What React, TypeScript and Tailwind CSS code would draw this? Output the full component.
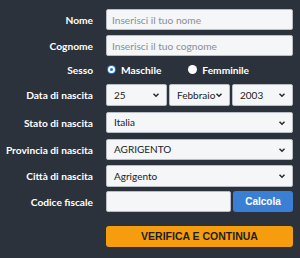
import React from "react";

const font = { fontFamily: 'Lato, "Open Sans", sans-serif' };
const arial = { fontFamily: '"Liberation Sans", Arial, sans-serif' };

function Chevron() {
  return (
    <svg width="8" height="6" viewBox="0 0 8 6" className="absolute right-[6px] top-1/2 -translate-y-1/2">
      <path d="M1.5 1.8 L4 4.3 L6.5 1.8" fill="none" stroke="#2a2a2a" strokeWidth="1.5" />
    </svg>
  );
}

function Select({ value, className = "" }: { value: string; className?: string }) {
  return (
    <div className={`relative rounded-[2px] border border-[#b9bec4] bg-[#f4f6f8] pl-[7px] flex items-center text-[10px] text-[#222] whitespace-nowrap ${className}`}>
      {value}
      <Chevron />
    </div>
  );
}

function Row({ label, children, className = "" }: { label: string; children: React.ReactNode; className?: string }) {
  return (
    <div className={`flex items-center ${className}`}>
      <div className="w-[93px] text-right text-[10.2px] leading-[14px] font-bold text-white whitespace-nowrap">{label}</div>
      <div className="ml-[13px] w-[187px]">{children}</div>
    </div>
  );
}

const inputCls =
  "block w-full h-[21px] rounded-[2px] border border-[#b9bec4] bg-[#f4f6f8] px-[5px] text-[10.2px] placeholder:text-[#8a8f95] outline-none";

export default function App() {
  return (
    <div className="w-[300px] h-[258px] overflow-hidden bg-[#2b323b] pt-[9px]" style={font}>
      <Row label="Nome">
        <input placeholder="Inserisci il tuo nome" className={inputCls} />
      </Row>
      <Row label="Cognome" className="mt-[5px]">
        <input placeholder="Inserisci il tuo cognome" className={inputCls} />
      </Row>
      <Row label="Sesso" className="mt-[5px] h-[17px]">
        <div className="flex items-center text-[10.2px] leading-[14px] font-bold text-white">
          <span className="ml-[1px] w-[9px] h-[9px] rounded-full bg-[#1a73e8] flex items-center justify-center">
            <span className="w-[3px] h-[3px] rounded-full bg-[#1a73e8] border-2 border-white box-content" />
          </span>
          <span className="ml-[5px]">Maschile</span>
          <span className="ml-[27px] w-[9px] h-[9px] rounded-full bg-white" />
          <span className="ml-[5px]">Femminile</span>
        </div>
      </Row>
      <Row label="Data di nascita" className="mt-[6px]">
        <div className="flex gap-[2px]">
          <Select value="25" className="w-[61px] h-[22px]" />
          <Select value="Febbraio" className="w-[61px] h-[22px]" />
          <Select value="2003" className="w-[61px] h-[22px]" />
        </div>
      </Row>
      <Row label="Stato di nascita" className="mt-[6px]">
        <Select value="Italia" className="h-[21px]" />
      </Row>
      <Row label="Provincia di nascita" className="mt-[6px]">
        <Select value="AGRIGENTO" className="h-[21px]" />
      </Row>
      <Row label="Città di nascita" className="mt-[5px]">
        <Select value="Agrigento" className="h-[22px]" />
      </Row>
      <Row label="Codice fiscale" className="mt-[4px]">
        <div className="flex gap-[2px]">
          <input className="block w-[125px] h-[21px] rounded-[2px] border border-[#b9bec4] bg-[#f4f6f8] px-[5px] text-[10.2px] outline-none" />
          <button className="w-[60px] h-[21px] rounded-[3px] bg-[#3b7fd4] text-white text-[10px] font-bold" style={arial}>
            Calcola
          </button>
        </div>
      </Row>
      <div className="mt-[14px] ml-[106px] w-[187px]">
        <button
          className="block w-full h-[21px] rounded-[3px] bg-[#f59d0e] text-[#1d1d1d] text-[10.5px] font-bold"
          style={arial}
        >
          VERIFICA E CONTINUA
        </button>
      </div>
    </div>
  );
}
